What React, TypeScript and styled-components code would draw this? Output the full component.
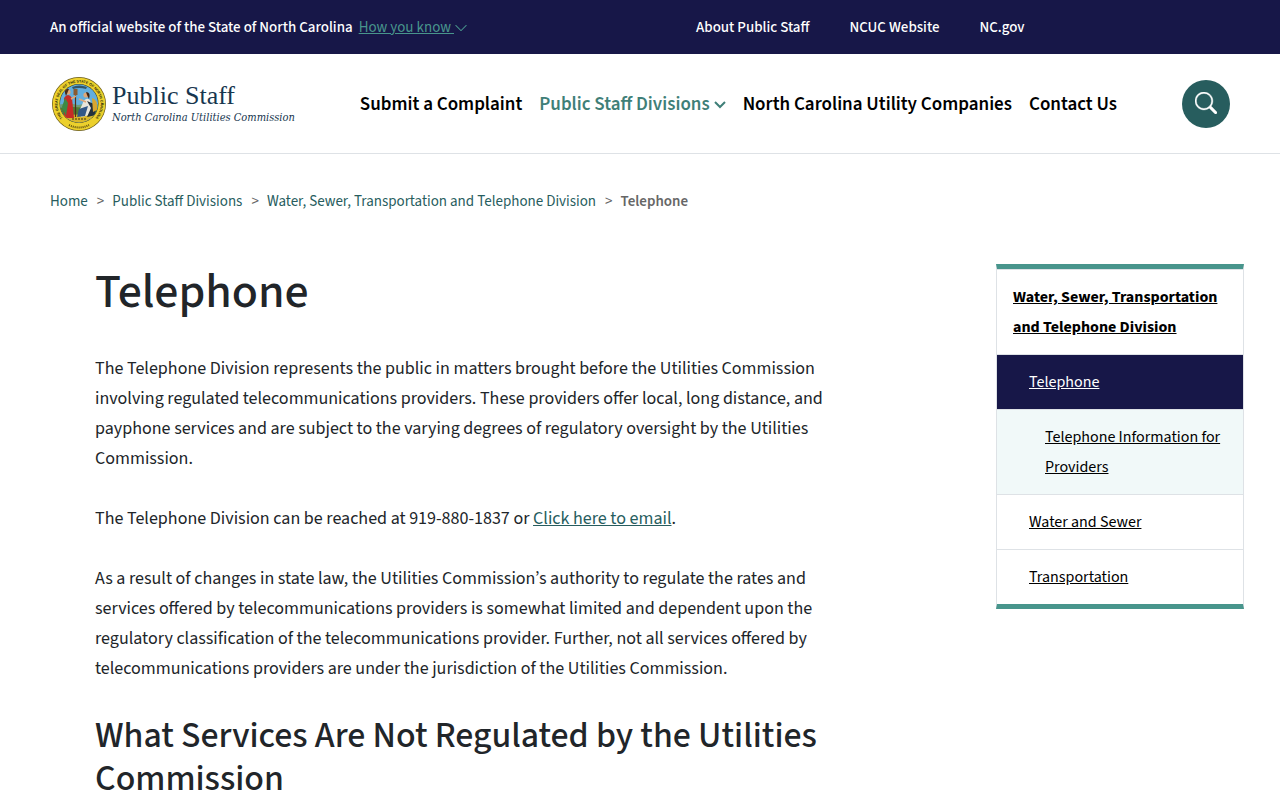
import React from "react";
import styled, { createGlobalStyle, css } from "styled-components";

const colors = {
  navy: "#171748",
  teal: "#48958c",
  tealDark: "#275d5e",
  tealNav: "#3f7f78",
  mint: "#f1f9f9",
  line: "#dee2e6",
  ink: "#212529",
};

const GlobalStyle = createGlobalStyle`
  *, *::before, *::after { box-sizing: border-box; }
  body {
    margin: 0;
    background: #fff;
    color: ${colors.ink};
    font-family: "Source Sans 3", "Source Sans Pro", "Noto Sans CJK SC", "Noto Sans", sans-serif;
    font-size: 18px;
    line-height: 30px;
  }
`;

const TopBar = styled.div`
  display: flex;
  align-items: center;
  justify-content: space-between;
  min-height: 54px;
  padding: 2px 50px 0;
  background: ${colors.navy};
  color: #fff;
  font-size: 15px;
  font-weight: 500;
`;

const Official = styled.p`
  display: flex;
  align-items: center;
  gap: 6px;
  margin: 0;
`;

const KnowButton = styled.button`
  display: flex;
  align-items: center;
  padding: 0;
  border: 0;
  background: none;
  color: ${colors.teal};
  font: inherit;
  font-weight: 400;
  text-decoration: underline;
  white-space: pre;
`;

const UtilityNav = styled.nav`
  display: flex;
  flex: 0 1 534px;
  gap: 40px;
`;

const UtilityLink = styled.a`
  color: inherit;
  text-decoration: none;
`;

const Header = styled.header`
  display: flex;
  align-items: center;
  justify-content: space-between;
  min-height: 100px;
  padding: 0 50px;
  border-bottom: 1px solid ${colors.line};
`;

const Brand = styled.a`
  display: flex;
  align-items: center;
  gap: 2px;
  color: #17364f;
  font-family: "Liberation Serif", serif;
  text-decoration: none;
  white-space: nowrap;
`;

const BrandText = styled.span`
  display: flex;
  flex-direction: column;
  padding-top: 2px;
`;

const BrandName = styled.span`
  font-size: 26px;
  line-height: 26px;
`;

const BrandSub = styled.span`
  font-family: "DejaVu Serif Condensed", "DejaVu Serif", serif;
  font-size: 11px;
  font-style: italic;
  line-height: 18px;
`;

const MainNav = styled.nav`
  display: flex;
  gap: 17px;
  padding-top: 2px;
  font-size: 19px;
  font-weight: 600;
`;

const MainLink = styled.a<{ $active?: boolean }>`
  display: flex;
  align-items: center;
  gap: 4px;
  color: ${(p) => (p.$active ? colors.tealNav : "#000")};
  text-decoration: none;
  white-space: nowrap;
`;

const SearchButton = styled.button`
  display: grid;
  place-items: center;
  width: 48px;
  height: 48px;
  padding: 0 0 2px;
  border: 0;
  border-radius: 50%;
  background: ${colors.tealDark};
  color: #fff;
`;

const Crumbs = styled.ol`
  display: flex;
  gap: 9px;
  margin: 0;
  padding: 33px 50px 0;
  list-style: none;
  color: #666;
  font-size: 15px;
`;

const Crumb = styled.li`
  display: flex;
  gap: 8px;

  & + &::before {
    content: ">";
  }
`;

const CrumbLink = styled.a`
  color: ${colors.tealDark};
  text-decoration: none;
`;

const CrumbCurrent = styled.span`
  font-weight: 600;
`;

const Columns = styled.div`
  display: flex;
  align-items: flex-start;
  justify-content: space-between;
  gap: 40px;
  padding: 47px 36px 40px 95px;
`;

const Article = styled.main`
  flex: 0 1 735px;
`;

const Title = styled.h1`
  margin: 0 0 34px;
  font-size: 48px;
  font-weight: 500;
  line-height: 56px;
`;

const Paragraph = styled.p`
  margin: 0 0 30px;
`;

const Subtitle = styled.h2`
  margin: 0;
  font-size: 36px;
  font-weight: 500;
  line-height: 43px;
`;

const InlineLink = styled.a`
  color: ${colors.tealDark};
`;

const SideNav = styled.nav`
  flex: 0 0 248px;
  border: 1px solid ${colors.line};
  border-width: 5px 1px;
  border-top-color: ${colors.teal};
  border-bottom-color: ${colors.teal};
  font-size: 16px;
`;

const SideList = styled.ul`
  margin: 0;
  padding: 0;
  list-style: none;
`;

const levels = {
  1: css`padding-left: 16px; font-weight: 700;`,
  2: css`padding-left: 32px;`,
  3: css`padding-left: 48px; background: ${colors.mint};`,
};

const SideItem = styled.li<{ $level: 1 | 2 | 3; $current?: boolean }>`
  padding: 12px 16px;
  border-top: 1px solid ${colors.line};
  color: #000;
  ${(p) => levels[p.$level]}
  ${(p) => p.$current && css`background: ${colors.navy}; color: #fff;`}
`;

const SideLink = styled.a`
  color: inherit;
`;

const Seal = () => (
  <svg width="60" height="60" viewBox="0 0 60 60" aria-hidden="true">
    <defs>
      <path id="seal-top" d="M18.250 48.600 A21.500 21.500 0 1 1 39.750 48.600" />
      <clipPath id="seal-disc">
        <circle cx="29" cy="29.500" r="19" />
      </clipPath>
    </defs>
    <circle cx="29" cy="30" r="27" fill="#6b5c18" />
    <circle cx="29" cy="30" r="26.300" fill="#ecd02c" />
    <circle cx="29" cy="29.500" r="19.500" fill="#3a3a20" />
    <g clipPath="url(#seal-disc)">
      <rect x="8" y="8" width="42" height="44" fill="#62aede" />
      <path d="M8 31 L18 29 L28 31 L40 29 L50 31 V36 H8Z" fill="#6e9c76" />
      <path d="M8 34 Q28 31 50 36 V44 H8Z" fill="#4f7d33" />
      <path d="M8 42 Q29 39 50 42 V52 H8Z" fill="#d9b729" />
      <path d="M22 13 Q29 10 37 13 L36 15 Q29 13 23 15Z" fill="#33566b" />
      <path d="M14 44 L14 24 Q18 18 22 24 L24 44 Z" fill="#c52b26" />
      <path d="M15 24 L12 33 L16 42 L18 29Z" fill="#3b8a45" />
      <circle cx="18" cy="18" r="2.600" fill="#dfa777" />
      <path d="M15 19 Q14 14 19 15 L16 22Z" fill="#4b2b19" />
      <path d="M25.500 15 V43" stroke="#4f301c" strokeWidth="1.200" />
      <path d="M23.500 15 h4 v6 h-4z" fill="#8a5b31" />
      <path d="M21 25 L26 22" stroke="#dfa777" strokeWidth="1.500" />
      <path d="M32 31 Q35 22 40 26 L42 34 L45 40 L31 43 L29 37Z" fill="#e7e5dc" />
      <path d="M37 27 L44 30 L46 41 L37 43 L41 34Z" fill="#23313c" />
      <path d="M29 35 L38 32 L35 42 L27 43Z" fill="#315787" />
      <circle cx="36" cy="21" r="2.600" fill="#dfa777" />
      <path d="M36 18 Q41 18 39 25 L37 21Z" fill="#3d2315" />
      <path d="M36 28 L29 25" stroke="#dfa777" strokeWidth="1.500" />
      <path d="M42 24 Q48 25 47 36 L43 38Z" fill="#d8a62e" />
      <path d="M22 45 H36" stroke="#3e3311" strokeWidth="1.200" strokeDasharray="2 1" />
    </g>
    <g fill="#211c08" fontFamily="Liberation Sans, sans-serif" fontWeight="700">
      <text fontSize="3.600">
        <textPath href="#seal-top" startOffset="50%" textAnchor="middle">
          THE GREAT SEAL OF THE STATE OF NORTH CAROLINA
        </textPath>
      </text>
    </g>
    <path d="M19 51 Q29 56 39 51" fill="none" stroke="#5c4e11" strokeWidth="2" strokeDasharray="1 1" />
  </svg>
);

const ThinChevron = () => (
  <svg width="14" height="14" viewBox="0 0 16 16" fill="currentColor" aria-hidden="true">
    <path
      fillRule="evenodd"
      d="M1.646 4.646a.5.5 0 0 1 .708 0L8 10.293l5.646-5.647a.5.5 0 0 1 .708.708l-6 6a.5.5 0 0 1-.708 0l-6-6a.5.5 0 0 1 0-.708z"
    />
  </svg>
);

const NavChevron = () => (
  <svg width="12" height="12" viewBox="0 0 12 12" fill="none" aria-hidden="true">
    <path d="M1 3 L6 8 L11 3" stroke="currentColor" strokeWidth="2" />
  </svg>
);

const SearchIcon = () => (
  <svg width="22" height="22" viewBox="0 0 16 16" fill="currentColor" aria-hidden="true">
    <path
      stroke="currentColor"
      strokeWidth="0.300"
      d="M11.742 10.344a6.500 6.500 0 1 0-1.397 1.398h-.001c.03.04.062.078.098.115l3.850 3.850a1 1 0 0 0 1.415-1.414l-3.850-3.850a1.007 1.007 0 0 0-.115-.1zM12 6.500a5.500 5.500 0 1 1-11 0 5.500 5.500 0 0 1 11 0z"
    />
  </svg>
);

export default function App() {
  return (
    <>
      <GlobalStyle />
      <TopBar>
        <Official>
          An official website of the State of North Carolina
          <KnowButton type="button">
            {"How you know "}
            <ThinChevron />
          </KnowButton>
        </Official>
        <UtilityNav aria-label="Utility">
          <UtilityLink href="#about">About Public Staff</UtilityLink>
          <UtilityLink href="#ncuc">NCUC Website</UtilityLink>
          <UtilityLink href="#ncgov">NC.gov</UtilityLink>
        </UtilityNav>
      </TopBar>
      <Header>
        <Brand href="#home">
          <Seal />
          <BrandText>
            <BrandName>Public Staff</BrandName>
            <BrandSub>North Carolina Utilities Commission</BrandSub>
          </BrandText>
        </Brand>
        <MainNav aria-label="Main">
          <MainLink href="#complaint">Submit a Complaint</MainLink>
          <MainLink href="#divisions" $active>
            Public Staff Divisions
            <NavChevron />
          </MainLink>
          <MainLink href="#companies">North Carolina Utility Companies</MainLink>
          <MainLink href="#contact">Contact Us</MainLink>
        </MainNav>
        <SearchButton type="button" aria-label="Search">
          <SearchIcon />
        </SearchButton>
      </Header>
      <nav aria-label="Breadcrumb">
        <Crumbs>
          <Crumb>
            <CrumbLink href="#home">Home</CrumbLink>
          </Crumb>
          <Crumb>
            <CrumbLink href="#divisions">Public Staff Divisions</CrumbLink>
          </Crumb>
          <Crumb>
            <CrumbLink href="#water">Water, Sewer, Transportation and Telephone Division</CrumbLink>
          </Crumb>
          <Crumb>
            <CrumbCurrent aria-current="page">Telephone</CrumbCurrent>
          </Crumb>
        </Crumbs>
      </nav>
      <Columns>
        <Article>
          <Title>Telephone</Title>
          <Paragraph>
            The Telephone Division represents the public in matters brought before the Utilities
            Commission involving regulated telecommunications providers. These providers offer
            local, long distance, and payphone services and are subject to the varying degrees of
            regulatory oversight by the Utilities Commission.
          </Paragraph>
          <Paragraph>
            The Telephone Division can be reached at 919-880-1837 or{" "}
            <InlineLink href="#email">Click here to email</InlineLink>.
          </Paragraph>
          <Paragraph>
            As a result of changes in state law, the Utilities Commission’s authority to regulate
            the rates and services offered by telecommunications providers is somewhat limited and
            dependent upon the regulatory classification of the telecommunications provider.
            Further, not all services offered by telecommunications providers are under the
            jurisdiction of the Utilities Commission.
          </Paragraph>
          <Subtitle>What Services Are Not Regulated by the Utilities Commission</Subtitle>
        </Article>
        <SideNav aria-label="Division">
          <SideList>
            <SideItem $level={1}>
              <SideLink href="#water">Water, Sewer, Transportation and Telephone Division</SideLink>
            </SideItem>
            <SideItem $level={2} $current>
              <SideLink href="#telephone" aria-current="page">Telephone</SideLink>
            </SideItem>
            <SideItem $level={3}>
              <SideLink href="#providers">Telephone Information for Providers</SideLink>
            </SideItem>
            <SideItem $level={2}>
              <SideLink href="#sewer">Water and Sewer</SideLink>
            </SideItem>
            <SideItem $level={2}>
              <SideLink href="#transportation">Transportation</SideLink>
            </SideItem>
          </SideList>
        </SideNav>
      </Columns>
    </>
  );
}
